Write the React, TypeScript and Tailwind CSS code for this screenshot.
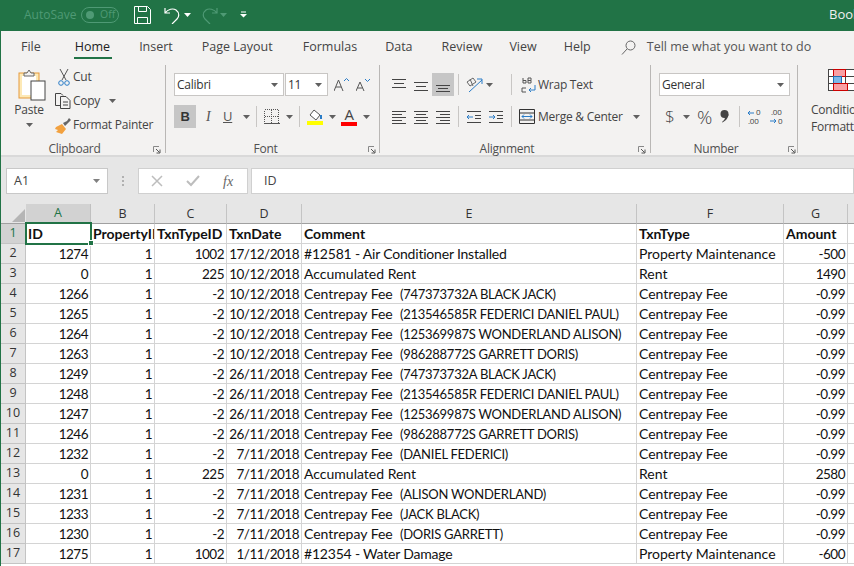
import type { ReactNode } from "react";

type Row = [string, string, string, string, string, string, string];

const rows: Row[] = [
  ["1274", "1", "1002", "17/12/2018", "#12581 - Air Conditioner Installed", "Property Maintenance", "-500"],
  ["0", "1", "225", "10/12/2018", "Accumulated Rent", "Rent", "1490"],
  ["1266", "1", "-2", "10/12/2018", "Centrepay Fee  (747373732A BLACK JACK)", "Centrepay Fee", "-0.99"],
  ["1265", "1", "-2", "10/12/2018", "Centrepay Fee  (213546585R FEDERICI DANIEL PAUL)", "Centrepay Fee", "-0.99"],
  ["1264", "1", "-2", "10/12/2018", "Centrepay Fee  (125369987S WONDERLAND ALISON)", "Centrepay Fee", "-0.99"],
  ["1263", "1", "-2", "10/12/2018", "Centrepay Fee  (986288772S GARRETT DORIS)", "Centrepay Fee", "-0.99"],
  ["1249", "1", "-2", "26/11/2018", "Centrepay Fee  (747373732A BLACK JACK)", "Centrepay Fee", "-0.99"],
  ["1248", "1", "-2", "26/11/2018", "Centrepay Fee  (213546585R FEDERICI DANIEL PAUL)", "Centrepay Fee", "-0.99"],
  ["1247", "1", "-2", "26/11/2018", "Centrepay Fee  (125369987S WONDERLAND ALISON)", "Centrepay Fee", "-0.99"],
  ["1246", "1", "-2", "26/11/2018", "Centrepay Fee  (986288772S GARRETT DORIS)", "Centrepay Fee", "-0.99"],
  ["1232", "1", "-2", "7/11/2018", "Centrepay Fee  (DANIEL FEDERICI)", "Centrepay Fee", "-0.99"],
  ["0", "1", "225", "7/11/2018", "Accumulated Rent", "Rent", "2580"],
  ["1231", "1", "-2", "7/11/2018", "Centrepay Fee  (ALISON WONDERLAND)", "Centrepay Fee", "-0.99"],
  ["1233", "1", "-2", "7/11/2018", "Centrepay Fee  (JACK BLACK)", "Centrepay Fee", "-0.99"],
  ["1230", "1", "-2", "7/11/2018", "Centrepay Fee  (DORIS GARRETT)", "Centrepay Fee", "-0.99"],
  ["1275", "1", "1002", "1/11/2018", "#12354 - Water Damage", "Property Maintenance", "-600"],
];

const headerRow: Row = ["ID", "PropertyID", "TxnTypeID", "TxnDate", "Comment", "TxnType", "Amount"];
const columns = ["A", "B", "C", "D", "E", "F", "G"];
const colWidths = ["w-[65px]", "w-[64px]", "w-[72px]", "w-[75px]", "w-[335px]", "w-[147px]", "w-[64px]"];

// little down arrow used all over the ribbon
function Caret({ className = "" }: { className?: string }) {
  return (
    <svg width="7" height="4" viewBox="0 0 7 4" className={className}>
      <path d="M0 0h7L3.500 4z" fill="#606060" />
    </svg>
  );
}

function Lines({ lines, color = "#444" }: { lines: number[][]; color?: string }) {
  return (
    <svg width="16" height="16" viewBox="0 0 16 16" shapeRendering="crispEdges">
      {lines.map((l, i) => (
        <rect key={i} x={l[0]} y={l[2]} width={l[1] - l[0]} height="1" fill={color} />
      ))}
    </svg>
  );
}

function Launcher({ className }: { className: string }) {
  return (
    <svg width="8" height="8" viewBox="0 0 8 8" className={`absolute ${className}`}>
      <path d="M.5 6V.5H6" fill="none" stroke="#888" />
      <path d="M3 3l3.500 3.500M7 3.500V7H3.500" fill="none" stroke="#555" />
    </svg>
  );
}

function Sep({ className = "" }: { className?: string }) {
  return <div className={`h-[21px] w-px shrink-0 bg-[#c8c6c4] ${className}`} />;
}

function Select({ text, className }: { text: string; className: string }) {
  return (
    <div className={`flex h-[23px] items-center justify-between border border-[#c8c6c4] bg-white pl-[2px] pr-[5px] ${className}`}>
      <span>{text}</span>
      <Caret />
    </div>
  );
}

function Group({ label, className, labelClass, children }: { label: string; className: string; labelClass: string; children: ReactNode }) {
  return (
    <div className={`relative mt-[3px] flex h-[88px] shrink-0 flex-col border-r border-[#b9b7b5] ${className}`}>
      <div className="h-[77px] shrink-0">{children}</div>
      <div className={`h-[14px] shrink-0 text-center leading-[14px] text-[#505050] ${labelClass}`}>{label}</div>
    </div>
  );
}

function TitleBar() {
  return (
    <div className="flex h-[31px] shrink-0 items-center bg-[#217346] pb-[2px] text-[12px]">
      <span className="ml-[23px] w-[57px] text-[#4f9a75]">AutoSave</span>
      <div className="flex h-[16px] w-[38px] items-center rounded-full border border-[#4f9a75] pl-[4px] text-[10.5px] text-[#4f9a75]">
        <span className="h-[8px] w-[8px] rounded-full bg-[#4f9a75]" />
        <span className="ml-[6px]">Off</span>
      </div>
      <svg width="17" height="18" viewBox="0 0 17 18" className="ml-[15px]" fill="none" stroke="#fff">
        <path d="M.5.5h13l3 3v14H.5z" />
        <path d="M4.500.5v5h8v-5M3.500 17.500v-6h10v6" />
      </svg>
      <svg width="18" height="18" viewBox="0 0 18 18" className="ml-[13px]" fill="none" stroke="#fff" strokeWidth="1.2">
        <path d="M1 2v5h5M1 7c3-4 8-5 11-3 4 3 3 7 1 9l-5 5" />
      </svg>
      <Caret className="ml-[2px] [&>path]:fill-white" />
      <svg width="18" height="18" viewBox="0 0 18 18" className="ml-[9px]" fill="none" stroke="#4f9a75" strokeWidth="1.2">
        <path d="M17 2v5h-5M17 7c-3-4-8-5-11-3-4 3-3 7-1 9l5 5" />
      </svg>
      <Caret className="ml-[2px] [&>path]:fill-[#4f9a75]" />
      <svg width="7" height="7" viewBox="0 0 7 7" className="ml-[13px]">
        <path d="M1 .5h5v1H1zM0 3h7L3.500 6.500z" fill="#fff" />
      </svg>
      <span className="ml-auto w-[25px] overflow-hidden text-[13px] text-[#f0f0f0]">Book</span>
    </div>
  );
}

function TabBar() {
  return (
    <div className="flex h-[31px] shrink-0 items-center pt-px text-[12.5px] text-[#444]">
      <span className="ml-[20px]">File</span>
      <div className="relative ml-[34px] text-[#222]">
        Home
        <div className="absolute left-[-1px] top-[19px] h-[2px] w-[38px] bg-[#217346]" />
      </div>
      <span className="ml-[29px]">Insert</span>
      <span className="ml-[29px]">Page Layout</span>
      <span className="ml-[30px]">Formulas</span>
      <span className="ml-[28px]">Data</span>
      <span className="ml-[29px]">Review</span>
      <span className="ml-[27px]">View</span>
      <span className="ml-[27px]">Help</span>
      <svg width="15" height="15" viewBox="0 0 15 15" className="ml-[30px]" fill="none" stroke="#666">
        <circle cx="9.500" cy="5.500" r="4.500" />
        <path d="M6 9l-5 5.500" />
      </svg>
      <span className="ml-[11px] text-[#555]">Tell me what you want to do</span>
    </div>
  );
}

function ClipboardGroup() {
  return (
    <Group label="Clipboard" className="w-[165px]" labelClass="pr-[17px]">
      <div className="flex">
        <div className="flex w-[56px] flex-col items-center">
          <svg width="28" height="32" viewBox="0 0 28 32" className="ml-[5px] mt-[4px]">
            <rect x="1" y="4" width="20" height="25" fill="#fde9b6" stroke="#e59a3c" />
            <rect x="4" y="7" width="14" height="19" fill="#fff" />
            <path d="M6 7V4h3l2-3 2 3h3v3z" fill="#f3f2f1" stroke="#666" />
            <rect x="13" y="12" width="14" height="19" fill="#fff" stroke="#444" />
          </svg>
          <span className="mt-[1px] leading-[16px] text-[#444]">Paste</span>
          <Caret className="mt-[5px]" />
        </div>
        <div className="flex flex-col text-[#444]">
          <div className="flex h-[24px] items-center">
            <svg width="12" height="17" viewBox="0 0 12 17" className="ml-[1px] mr-[3px]" fill="none">
              <path d="M2 0l6 11M10 0L4 11" stroke="#555" />
              <circle cx="3" cy="14" r="2.300" stroke="#2a7cc7" />
              <circle cx="9" cy="14" r="2.300" stroke="#2a7cc7" />
            </svg>
            <span>Cut</span>
          </div>
          <div className="flex h-[24px] items-center">
            <svg width="16" height="16" viewBox="0 0 16 16" className="-ml-[2px] mr-[2px]" fill="none" stroke="#444">
              <path d="M5 12.500H.5V.5H6l2 2" />
              <path d="M5.500 3.500H11l4 4v8H5.500z" />
              <path d="M8 9h5M8 12h5" />
            </svg>
            <span>Copy</span>
            <Caret className="ml-[9px]" />
          </div>
          <div className="flex h-[24px] items-center">
            <svg width="17" height="17" viewBox="0 0 17 17" className="-ml-[2px] mr-[1px]">
              <path d="M1 10l6-3 4 5-4 5-6-2 2-2-3-1z" fill="#f2a13f" />
              <path d="M8 6l2 3 6-6-2-2-2 3z" fill="#666" />
            </svg>
            <span>Format Painter</span>
          </div>
        </div>
      </div>
      <Launcher className="left-[152px] top-[81px]" />
    </Group>
  );
}

function FontGroup() {
  return (
    <Group label="Font" className="w-[214px]" labelClass="pr-[14px]">
      <div className="flex flex-col gap-[9px] pl-[8px] pt-[8px] text-[#333]">
        <div className="flex items-center">
          <Select text="Calibri" className="w-[110px]" />
          <Select text="11" className="ml-px w-[43px]" />
          <svg width="16" height="14" viewBox="0 0 16 14" className="ml-[6px]" fill="none">
            <path d="M0 13L4.500 2 9 13M2 9h5" stroke="#555" />
            <path d="M10 3l2.500-2.500L15 3" stroke="#2a7cc7" />
          </svg>
          <svg width="14" height="14" viewBox="0 0 14 14" className="ml-[6px]" fill="none">
            <path d="M0 13L4 4l4 9M1.500 10h5" stroke="#555" />
            <path d="M9 1l2.500 2.500L14 1" stroke="#2a7cc7" />
          </svg>
        </div>
        <div className="flex h-[23px] items-center">
          <div className="flex h-[23px] w-[22px] items-center justify-center bg-[#c6c6c6] font-[Liberation_Sans] text-[13px] font-bold text-[#333]">B</div>
          <span className="ml-[10px] w-[6px] font-[Liberation_Serif] text-[14px] italic text-[#555]">I</span>
          <span className="ml-[11px] w-[9px] text-[13px] leading-[15px] text-[#555] underline">U</span>
          <Caret className="ml-[11px]" />
          <Sep className="ml-[6px]" />
          <svg width="16" height="16" viewBox="0 0 16 16" className="ml-[7px]" fill="none" stroke="#555" strokeDasharray="1 1" shapeRendering="crispEdges">
            <path d="M.5.5h14v14H.5zM7.500.5v14M.5 7.500h14" />
            <path d="M.5 14.500h15" strokeDasharray="none" />
          </svg>
          <Caret className="ml-[6px]" />
          <Sep className="ml-[6px]" />
          <div className="ml-[7px] flex w-[16px] flex-col items-center">
            <svg width="15" height="12" viewBox="0 0 15 12" fill="none">
              <path d="M6 1l6 5-4 5-6-5z" stroke="#555" fill="#fff" />
              <path d="M13 6v4" stroke="#2a7cc7" strokeWidth="2" />
            </svg>
            <div className="h-[4px] w-[16px] bg-[#ffff00]" />
          </div>
          <Caret className="ml-[6px]" />
          <div className="ml-[5px] flex w-[16px] flex-col items-center">
            <span className="h-[13px] text-[15px] leading-[13px] text-[#444]">A</span>
            <div className="mt-[1px] h-[4px] w-[16px] bg-[#ff0000]" />
          </div>
          <Caret className="ml-[6px]" />
        </div>
      </div>
      <Launcher className="left-[202px] top-[81px]" />
    </Group>
  );
}

function AlignmentGroup() {
  return (
    <Group label="Alignment" className="w-[271px]" labelClass="pr-[16px]">
      <div className="flex flex-col gap-[9px] pl-[8px] pt-[8px] text-[#444]">
        <div className="flex h-[23px] items-center">
          <div className="flex w-[22px] justify-center">
            <Lines lines={[[1, 15, 2], [3, 13, 6], [1, 15, 10]]} />
          </div>
          <div className="flex w-[22px] justify-center">
            <Lines lines={[[1, 15, 5], [3, 13, 9], [1, 15, 13]]} />
          </div>
          <div className="flex h-[23px] w-[22px] items-center justify-center bg-[#c6c6c6]">
            <Lines lines={[[1, 15, 8], [3, 13, 11], [1, 15, 14]]} />
          </div>
          <Sep className="ml-[4px]" />
          <svg width="17" height="17" viewBox="0 0 17 17" className="ml-[7px]" fill="none">
            <path d="M1 6l6-4 3 4-6 4zM4 3l3 7" stroke="#666" />
            <path d="M3 16L16 4M11 3h5v5" stroke="#2a7cc7" />
          </svg>
          <Caret className="ml-[3px]" />
          <Sep className="ml-[18px]" />
          <svg width="15" height="18" viewBox="0 0 15 18" className="ml-[9px]" fill="none">
            <path d="M2 7V2M2 4.500h3v2.500H2M7 7V2h3v2.500H7M7 4.500h3V7H7" stroke="#555" />
            <path d="M5 12H1v4h4" stroke="#555" />
            <path d="M14 9v5H8m2-2l-2 2 2 2" stroke="#2a7cc7" />
          </svg>
          <span className="ml-[2px]">Wrap Text</span>
        </div>
        <div className="flex h-[23px] items-center">
          <div className="flex w-[22px] justify-center">
            <Lines lines={[[1, 15, 2], [1, 11, 5], [1, 15, 8], [1, 11, 11], [1, 15, 14]]} />
          </div>
          <div className="flex w-[22px] justify-center">
            <Lines lines={[[1, 15, 2], [3, 13, 5], [1, 15, 8], [3, 13, 11], [1, 15, 14]]} />
          </div>
          <div className="flex w-[22px] justify-center">
            <Lines lines={[[1, 15, 2], [5, 15, 5], [1, 15, 8], [5, 15, 11], [1, 15, 14]]} />
          </div>
          <Sep className="ml-[4px]" />
          <svg width="16" height="16" viewBox="0 0 16 16" className="ml-[7px]" fill="none">
            <path d="M1 2.500h14M9 6.500h6M9 9.500h6M1 13.500h14" stroke="#444" />
            <path d="M7 8H1m2-2L1 8l2 2" stroke="#2a7cc7" />
          </svg>
          <svg width="16" height="16" viewBox="0 0 16 16" className="ml-[6px]" fill="none">
            <path d="M1 2.500h14M9 6.500h6M9 9.500h6M1 13.500h14" stroke="#444" />
            <path d="M1 8h6M5 6l2 2-2 2" stroke="#2a7cc7" />
          </svg>
          <Sep className="ml-[7px]" />
          <svg width="16" height="15" viewBox="0 0 16 15" className="ml-[7px]" fill="none">
            <path d="M.5.5h15v14H.5z" stroke="#333" />
            <path d="M.5 4h15M.5 11h15" stroke="#333" />
            <path d="M3 7.500h10M5 5.500l-2 2 2 2M11 5.500l2 2-2 2" stroke="#2a7cc7" />
          </svg>
          <span className="ml-[3px]">Merge &amp; Center</span>
          <Caret className="ml-[10px]" />
        </div>
      </div>
      <Launcher className="left-[258px] top-[81px]" />
    </Group>
  );
}

function NumberGroup() {
  return (
    <Group label="Number" className="w-[147px]" labelClass="pr-[16px]">
      <div className="flex flex-col gap-[9px] pl-[8px] pt-[8px]">
        <Select text="General" className="w-[131px] text-[#333]" />
        <div className="flex h-[23px] items-center text-[#444]">
          <span className="ml-[6px] w-[10px] text-[17px] font-light">$</span>
          <Caret className="ml-[8px]" />
          <span className="ml-[7px] text-[19px] font-light leading-[20px]">%</span>
          <svg width="9" height="13" viewBox="0 0 9 13" className="ml-[8px]">
            <circle cx="4.500" cy="4" r="4" fill="#444" />
            <path d="M8.500 4c0 4-3 7-6 8.500L2 12c2-1.500 3-3 3-5z" fill="#444" />
          </svg>
          <Sep className="ml-[10px]" />
          <svg width="16" height="16" viewBox="0 0 16 16" className="ml-[7px]" fill="none">
            <path d="M7 4H1m2-2L1 4l2 2" stroke="#2a7cc7" />
            <text x="9" y="6" fontSize="8" fill="#444">0</text>
            <text x="1" y="15" fontSize="8" fill="#444">.00</text>
          </svg>
          <svg width="16" height="16" viewBox="0 0 16 16" className="ml-[6px]" fill="none">
            <text x="2" y="6" fontSize="8" fill="#444">.00</text>
            <path d="M1 12h6M5 10l2 2-2 2" stroke="#2a7cc7" />
            <text x="9" y="15" fontSize="8" fill="#444">0</text>
          </svg>
        </div>
      </div>
      <Launcher className="left-[137px] top-[81px]" />
    </Group>
  );
}

function ConditionalGroup() {
  return (
    <div className="mt-[3px] flex w-[56px] shrink-0 flex-col pl-[13px]">
      <svg width="40" height="22" viewBox="0 0 40 22" className="ml-[17px] mt-[4px] shrink-0" shapeRendering="crispEdges">
        <path d="M.5.5h39v21H.5zM.5 7.500h39M.5 14.500h39M5.500.5v21M17.500.5v21M26.500.5v21" fill="#fff" stroke="#444" />
        <rect x="5.500" y=".5" width="12" height="7" fill="#f9a0a4" stroke="#c00" />
        <rect x="5.500" y="7.500" width="8" height="7" fill="#7db8e8" stroke="#1f6fb5" />
        <rect x="5.500" y="14.500" width="14" height="7" fill="#f9a0a4" stroke="#c00" />
      </svg>
      <span className="mt-[10px] whitespace-nowrap leading-[17px] text-[#444]">Conditional</span>
      <span className="whitespace-nowrap leading-[17px] text-[#444]">Formatting</span>
    </div>
  );
}

function Ribbon() {
  return (
    <div className="flex h-[93px] shrink-0 text-[12px] tracking-[-0.25px]">
      <ClipboardGroup />
      <FontGroup />
      <AlignmentGroup />
      <NumberGroup />
      <ConditionalGroup />
    </div>
  );
}

function FormulaBar() {
  return (
    <div className="flex h-[49px] shrink-0 items-start border-t-2 border-[#d9d9d9] bg-[#e6e6e6] pt-[11px] text-[12.5px]">
      <div className="ml-[5px] flex h-[26px] w-[102px] items-center justify-between border border-[#c8c8c8] bg-white pl-[7px] pr-[7px] text-[#444]">
        A1
        <Caret className="[&>path]:fill-[#808080]" />
      </div>
      <div className="ml-[14px] flex h-[26px] w-px flex-col items-center justify-center gap-[2px]">
        <span className="h-[2px] w-[2px] shrink-0 bg-[#b0b0b0]" />
        <span className="h-[2px] w-[2px] shrink-0 bg-[#b0b0b0]" />
        <span className="h-[2px] w-[2px] shrink-0 bg-[#b0b0b0]" />
      </div>
      <div className="ml-[15px] flex h-[26px] w-[110px] items-center border border-[#d0d0d0] bg-white">
        <svg width="12" height="12" viewBox="0 0 12 12" className="ml-[12px]" fill="none" stroke="#bdbdbd" strokeWidth="1.500">
          <path d="M1 1l10 10M11 1L1 11" />
        </svg>
        <svg width="14" height="12" viewBox="0 0 14 12" className="ml-[23px]" fill="none" stroke="#bdbdbd" strokeWidth="2">
          <path d="M1 6l4 4 8-9" />
        </svg>
        <span className="ml-[23px] font-[Liberation_Serif] text-[14px] italic text-[#666]">fx</span>
      </div>
      <div className="ml-[3px] flex h-[26px] flex-1 items-center border border-[#d0d0d0] bg-white pl-[12px] text-[#444]">ID</div>
    </div>
  );
}

// digits and capitals in the reference's font run narrower than Lato's
function CellText({ text, col, header }: { text: string; col: number; header: boolean }) {
  if (header) return <>{text}</>;
  if (col === 4) {
    const at = text.indexOf("(");
    if (at > 0) {
      return (
        <>
          {text.slice(0, at)}
          <span className="text-[13px] tracking-[-0.25px]">{text.slice(at)}</span>
        </>
      );
    }
    if (text.startsWith("#")) return <span className="tracking-[-0.2px]">{text}</span>;
    return <>{text}</>;
  }
  if (col === 5) return <>{text}</>;
  return <span className="text-[13.5px] tracking-[-0.5px]">{text}</span>;
}

function Sheet() {
  return (
    <div className="relative flex-1 bg-white font-[Lato] text-[14px] text-[#111]">
      {/* column headers */}
      <div className="flex h-[20px] bg-[#e6e6e6] font-['Open_Sans',sans-serif] text-[12.5px] text-[#333]">
        <div className="flex w-[25px] items-end justify-end border-b border-[#a0a0a0] pb-[1px] pr-[1px]">
          <svg width="13" height="13" viewBox="0 0 13 13">
            <path d="M13 0v13H0z" fill="#b5b5b5" />
          </svg>
        </div>
        {columns.map((c, i) => (
          <div
            key={c}
            className={`${colWidths[i]} flex shrink-0 items-center justify-center border-r pt-px ${
              i === 0 ? "border-b-2 border-r-[#c0c0c0] border-b-[#217346] bg-[#d2d2d2] text-[#217346]" : "border-b border-r-[#c4c4c4] border-b-[#a0a0a0]"
            }`}
          >
            {c}
          </div>
        ))}
        <div className="flex-1 border-b border-[#a0a0a0]" />
      </div>
      {/* header row then data */}
      {[headerRow, ...rows].map((row, r) => (
        <div key={r} className="flex h-[20px]">
          <div
            className={`flex w-[25px] shrink-0 items-center justify-center border-b border-r font-['Open_Sans',sans-serif] text-[12.5px] ${
              r === 0 ? "border-b-[#c4c4c4] border-r-[#217346] bg-[#d2d2d2] text-[#217346]" : "border-[#c4c4c4] bg-[#e6e6e6] text-[#333]"
            }`}
          >
            {r + 1}
          </div>
          {row.map((cell, i) => {
            const isText = r === 0 || i === 4 || i === 5;
            return (
              <div
                key={i}
                className={`${colWidths[i]} shrink-0 overflow-hidden whitespace-pre border-b border-r border-[#d4d4d4] px-[2px] leading-[19px] ${
                  isText ? "text-left" : "text-right"
                } ${r === 0 ? "font-bold" : ""}`}
              >
                <CellText text={cell} col={i} header={r === 0} />
              </div>
            );
          })}
          <div className="flex-1 border-b border-[#d4d4d4]" />
        </div>
      ))}
      {/* active cell outline */}
      <div className="absolute left-[24px] top-[18px] h-[23px] w-[67px] border-2 border-[#217346]" />
      <div className="absolute left-[87px] top-[36px] h-[6px] w-[6px] border border-white bg-[#217346]" />
    </div>
  );
}

export default function App() {
  return (
    <div className="flex h-[566px] w-[854px] flex-col overflow-hidden border-l border-[#217346] bg-[#f3f2f1] font-['Open_Sans','Noto_Sans',sans-serif]">
      <TitleBar />
      <TabBar />
      <Ribbon />
      <FormulaBar />
      <Sheet />
    </div>
  );
}
